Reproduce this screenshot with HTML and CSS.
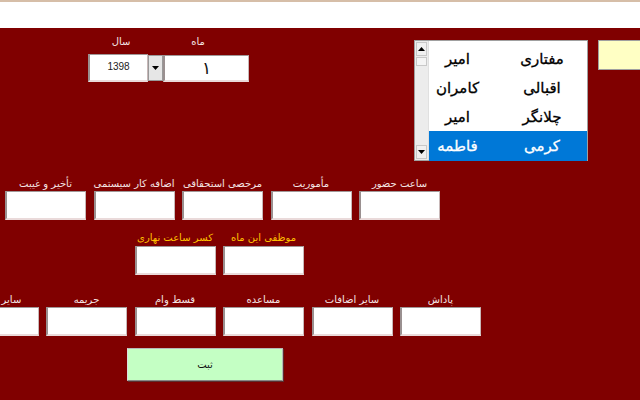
FILE: index.html
```html
<!DOCTYPE html>
<html lang="fa" dir="rtl">
<head>
<meta charset="utf-8">
<title>فرم کارکرد</title>
<link rel="stylesheet" href="styles.css">
</head>
<body>
<div class="topbar"></div>
<main class="form">
  <section class="head">
    <div class="yellow"></div>
    <div class="listbox">
      <div class="rows">
        <div class="item"><span>مفتاری</span><span>امیر</span></div>
        <div class="item"><span>اقبالی</span><span>کامران</span></div>
        <div class="item"><span>چلانگر</span><span>امیر</span></div>
        <div class="item sel"><span>کرمی</span><span>فاطمه</span></div>
      </div>
      <div class="scroll">
        <div class="sbtn"><svg width="7" height="4" viewBox="0 0 7 4"><path d="M0 4h7L3.5 0z" fill="#000"/></svg></div>
        <div class="thumb"></div>
        <div class="track"></div>
        <div class="sbtn"><svg width="7" height="4" viewBox="0 0 7 4"><path d="M0 0h7L3.5 4z" fill="#000"/></svg></div>
      </div>
    </div>
    <div class="date">
      <div class="lbl dl-month">ماه</div>
      <div class="lbl dl-year">سال</div>
      <div class="box mbox">۱</div>
      <div class="drop"><svg width="7" height="4" viewBox="0 0 7 4"><path d="M0 0h7L3.5 4z" fill="#000"/></svg></div>
      <div class="box ybox">1398</div>
    </div>
  </section>

  <section class="row r1">
    <div class="cell"><div class="lbl">ساعت حضور</div><div class="box"></div></div>
    <div class="cell"><div class="lbl">مأموریت</div><div class="box"></div></div>
    <div class="cell"><div class="lbl">مرخصی استحقاقی</div><div class="box"></div></div>
    <div class="cell"><div class="lbl">اضافه کار سیستمی</div><div class="box"></div></div>
    <div class="cell"><div class="lbl">تأخیر و غیبت</div><div class="box"></div></div>
  </section>

  <section class="row r2">
    <div class="cell"><div class="lbl gold">موظفی این ماه</div><div class="box"></div></div>
    <div class="cell"><div class="lbl gold">کسر ساعت نهاری</div><div class="box"></div></div>
  </section>

  <section class="row r3">
    <div class="cell"><div class="lbl">پاداش</div><div class="box"></div></div>
    <div class="cell"><div class="lbl">سایر اضافات</div><div class="box"></div></div>
    <div class="cell"><div class="lbl">مساعده</div><div class="box"></div></div>
    <div class="cell"><div class="lbl">قسط وام</div><div class="box"></div></div>
    <div class="cell"><div class="lbl">جریمه</div><div class="box"></div></div>
    <div class="cell"><div class="lbl">سایر کسور</div><div class="box"></div></div>
  </section>

  <div class="actions">
    <button class="submit">ثبت</button>
  </div>
</main>
</body>
</html>
```

FILE: styles.css
```css
html, body {
  margin: 0;
  padding: 0;
  width: 640px;
  height: 400px;
  overflow: hidden;
  font-family: "DejaVu Sans", "Noto Sans", sans-serif;
}
body {
  background: #800000;
}
.topbar {
  height: 26px;
  background: #ffffff;
  border-top: 2px solid #d6bea8;
}
.form {
  height: 372px;
}
.head {
  display: flex;
  align-items: flex-start;
  padding-top: 12px;
  height: 122px;
  box-sizing: border-box;
}
.yellow {
  width: 60px;
  height: 30px;
  margin-right: -18px;
  background: #ffffc4;
  border: 1px solid #a0a0a0;
  box-sizing: border-box;
  flex: none;
}
.listbox {
  margin-right: 10px;
  width: 174px;
  height: 121px;
  background: #fff;
  border: 1px solid #a0a0a0;
  box-sizing: border-box;
  display: flex;
  flex: none;
}
.rows {
  flex: 1;
  padding-top: 3px;
}
.item {
  display: grid;
  grid-template-columns: 1fr 1fr;
  height: 29px;
  align-items: center;
  font-size: 15px;
  color: #000;
  -webkit-text-stroke: 0.3px #000;
}
.item span {
  text-align: center;
}
.item span:first-child {
  padding-right: 11px;
}
.item span:last-child {
  padding-right: 22px;
}
.item.sel {
  background: #0078d7;
  color: #fff;
  -webkit-text-stroke: 0.3px #fff;
  height: 30px;
}
.scroll {
  width: 13px;
  flex: none;
  display: flex;
  flex-direction: column;
  background: #ececec;
  border-right: 1px solid #e0e0e0;
}
.sbtn {
  height: 12px;
  margin: 1px;
  background: #f0f0f0;
  border: 1px solid #c8c8c8;
  display: flex;
  align-items: center;
  justify-content: center;
}
.thumb {
  height: 7px;
  margin: 0 1px;
  background: #f4f4f4;
  border: 1px solid #c8c8c8;
}
.track {
  flex: 1;
}
.date {
  display: grid;
  grid-template-columns: 86px 15px 60px;
  grid-template-rows: 14px 28px;
  row-gap: 5px;
  margin-right: 165px;
  margin-top: -5px;
  flex: none;
}
.lbl {
  font-size: 10px;
  color: #f4e4e4;
  line-height: 14px;
  height: 14px;
  white-space: nowrap;
  text-align: center;
}
.lbl.gold {
  color: #ffc000;
}
.dl-month {
  grid-column: 1;
  padding-right: 16px;
}
.dl-year {
  grid-column: 3;
  padding-left: 6px;
}
.box {
  background: #fff;
  border-style: solid;
  border-width: 1px 1px 2px 2px;
  border-color: #a09898 #c8b8b8 #eadada #9a9090;
  box-sizing: border-box;
  width: 81px;
  height: 29px;
}
.mbox {
  grid-column: 1;
  grid-row: 2;
  width: 86px;
  height: 27px;
  margin-top: 1px;
  font-size: 17px;
  line-height: 24px;
  text-align: center;
  color: #111;
}
.drop {
  grid-column: 2;
  grid-row: 2;
  width: 15px;
  height: 26px;
  margin-top: 1px;
  background: #e6e6e6;
  border: 1px solid #999;
  box-sizing: border-box;
  display: flex;
  align-items: center;
  justify-content: center;
}
.ybox {
  grid-column: 3;
  grid-row: 2;
  width: 60px;
  height: 28px;
  font-size: 10px;
  line-height: 24px;
  text-align: center;
  color: #222;
  font-family: "Liberation Sans", sans-serif;
}
.row {
  display: flex;
  gap: 7.5px;
}
.cell {
  display: flex;
  flex-direction: column;
  align-items: center;
  width: 81px;
  flex: none;
}
.r1 {
  padding-right: 200px;
  padding-top: 27px;
}
.r2 {
  padding-right: 336px;
  padding-top: 11px;
}
.r2 .lbl {
  margin-bottom: 1px;
}
.r3 {
  padding-right: 159px;
  padding-top: 18px;
}
.actions {
  display: flex;
  padding-right: 357px;
  padding-top: 12px;
}
.submit {
  width: 156px;
  height: 33px;
  background: #c4ffc4;
  border: 1px solid #b8b8b8;
  border-bottom-color: #888;
  border-left-color: #ddd;
  box-shadow: 1px 1px 0 #5a3030;
  font-family: "DejaVu Sans", sans-serif;
  font-size: 10px;
  color: #111;
  padding: 0;
}
```
